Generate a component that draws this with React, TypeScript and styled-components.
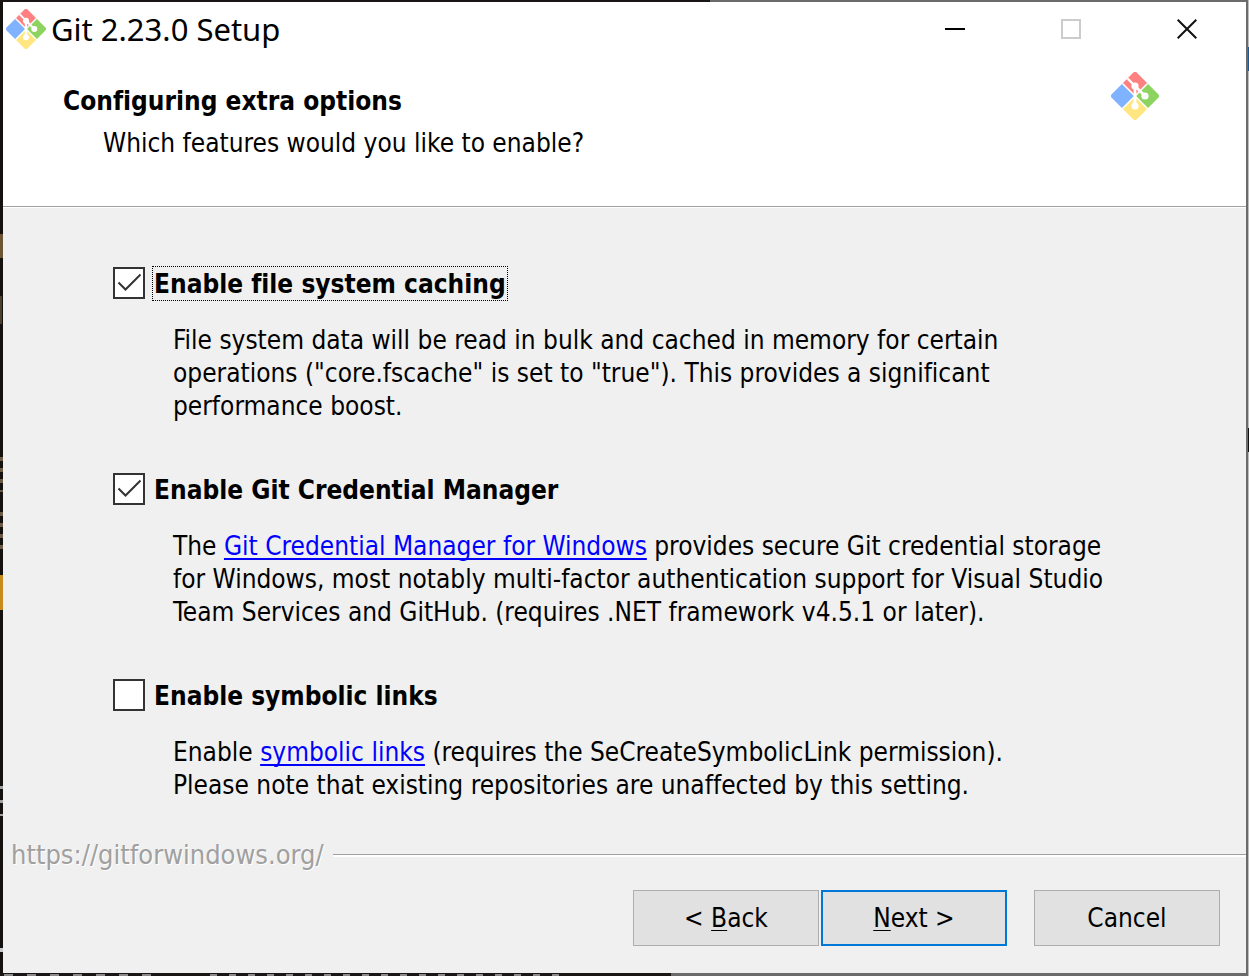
import React, { useId, useState } from 'react';
import styled, { createGlobalStyle, css } from 'styled-components';

const GlobalStyle = createGlobalStyle`
  * { box-sizing: border-box; }
  body {
    margin: 0;
    color: #000;
    font-family: "DejaVu Sans Condensed", "DejaVu Sans", Tahoma, sans-serif;
    font-size: 26px;
    font-variant-ligatures: none;
    line-height: 33px;
  }
  h1, h2, p { margin: 0; }
`;

const Desktop = styled.div`
  position: relative;
  display: flex;
  min-height: 100vh;
  padding: 2px 3px 3px;
  overflow: hidden;
  background:
    linear-gradient(#c98a1c, #c98a1c) 0 575px / 3px 35px no-repeat,
    linear-gradient(#6b5534, #6b5534) 0 234px / 3px 24px no-repeat,
    linear-gradient(#4d4030, #4d4030) 0 296px / 2px 28px no-repeat,
    repeating-linear-gradient(#6b5a45 0 4px, #14110f 4px 11px) 0 457px / 3px 35px no-repeat,
    repeating-linear-gradient(#6b5a45 0 4px, #14110f 4px 11px) 0 512px / 3px 37px no-repeat,
    repeating-linear-gradient(#a0a0a0 0 3px, #14110f 3px 14px) 0 786px / 3px 30px no-repeat,
    linear-gradient(#c8c8c8, #c8c8c8) 0 948px / 3px 4px no-repeat,
    linear-gradient(#6b6b6b, #6b6b6b) right 1px top 0 / 2px 100% no-repeat,
    linear-gradient(#1c5a94, #1c5a94) right 0 top 47px / 1px 24px no-repeat,
    linear-gradient(#111, #111) right 0 top 428px / 1px 24px no-repeat,
    linear-gradient(#bdbdbd, #bdbdbd) right 0 top 0 / 1px 100% no-repeat,
    linear-gradient(90deg, #1a1616 710px, #6b6b6b 710px) 0 0 / 100% 2px no-repeat,
    repeating-linear-gradient(90deg, #8a8a8a 0 9px, #1a1616 9px 23px) 4px 100% / 160px 2px no-repeat,
    repeating-linear-gradient(90deg, #8a8a8a 0 7px, #1a1616 7px 19px) 210px 100% / 350px 2px no-repeat,
    linear-gradient(90deg, #1a1616 671px, #6b6b6b 671px) 0 100% / 100% 3px no-repeat,
    #14110f;
`;

const Window = styled.main`
  flex: 1;
  display: flex;
  flex-direction: column;
  background: #f0f0f0;
`;

const TitleBar = styled.header`
  display: flex;
  align-items: center;
  height: 54px;
  padding: 0 1px 0 3px;
  background: #fff;
`;

const Title = styled.h1`
  flex: 1;
  margin-left: 5px;
  font: 400 31px/40px "Noto Sans", "Segoe UI", sans-serif;
`;

const CaptionButton = styled.button`
  display: grid;
  place-items: center;
  width: 116px;
  height: 54px;
  padding: 0;
  border: 0;
  background: none;
`;

const Heading = styled.section`
  display: flex;
  justify-content: space-between;
  align-items: flex-start;
  height: 151px;
  padding: 16px 87px 0 60px;
  border-bottom: 1px solid #a0a0a0;
  box-shadow: 0 1px #fff;
  background: #fff;
`;

const HeadingText = styled.div`
  padding-top: 13px;
`;

const PageTitle = styled.h2`
  font-size: 26px;
  font-weight: 700;
`;

const PageSubtitle = styled.p`
  margin: 9px 0 0 40px;
`;

const Options = styled.form`
  flex: 1;
  display: flex;
  flex-direction: column;
  gap: 49px;
  padding: 59px 110px 35px;
`;

const OptionLabel = styled.label`
  display: flex;
  align-items: flex-start;
  gap: 7px;
  font-weight: 700;
`;

const LabelText = styled.span<{ $focused?: boolean }>`
  padding: 2px 1px 0;
  border: 1px solid transparent;
  line-height: 31px;
  white-space: nowrap;
  ${({ $focused }) => $focused && css`border: 1px dotted #000;`}
`;

const CheckFrame = styled.span`
  display: grid;
  flex: none;
  width: 32px;
  height: 32px;
  margin-top: 1px;

  & > * { grid-area: 1 / 1; }
`;

const CheckInput = styled.input`
  appearance: none;
  width: 32px;
  height: 32px;
  margin: 0;
  border: 2px solid #333;
  background: #fff;
  outline: none;
`;

const Tick = styled.svg`
  width: 32px;
  height: 32px;
  pointer-events: none;
`;

const Description = styled.p`
  max-width: 960px;
  margin: 23px 0 0 60px;
`;

const Link = styled.a`
  color: #00f;
  text-decoration-thickness: 2px;
  text-underline-offset: 3px;
  text-decoration-skip-ink: none;
`;

const SiteRule = styled.div`
  display: flex;
  align-items: center;
  gap: 9px;
  padding-left: 8px;
  color: #a0a0a0;
  font-size: 27px;
  text-shadow: 1px 1px #fff;

  &::after {
    content: "";
    flex: 1;
    height: 2px;
    margin-top: 2px;
    border-top: 1px solid #a0a0a0;
    background: #fff;
  }
`;

const Footer = styled.footer`
  display: flex;
  justify-content: flex-end;
  gap: 2px;
  padding: 19px 26px 27px;
`;

const PushButton = styled.button<{ $primary?: boolean; $apart?: boolean }>`
  width: 186px;
  height: 56px;
  margin-left: ${({ $apart }) => ($apart ? '25px' : '0')};
  padding: 1px 0 0;
  border: ${({ $primary }) => ($primary ? '2px solid #0078d7' : '1px solid #adadad')};
  background: #e1e1e1;
  color: #000;
  font: inherit;
`;

const AccessKey = styled.span`
  text-decoration: underline;
  text-decoration-thickness: 1px;
  text-underline-offset: 3px;
  text-decoration-skip-ink: none;
`;

function GitLogo({ size }: { size: number }) {
  const clip = useId();
  return (
    <svg width={size} height={size} viewBox="0 0 48 48" aria-hidden="true">
      <clipPath id={clip}>
        <rect x="6.2" y="6.2" width="35.6" height="35.6" rx="3" transform="rotate(45 24 24)" />
      </clipPath>
      <g clipPath={`url(#${clip})`}>
        <path d="M24 24 0 0H48Z" fill="#ff8080" />
        <path d="M24 24 0 0V48Z" fill="#80b3ff" />
        <path d="M24 24 48 0V48Z" fill="#8dd35f" />
        <path d="M24 24 0 48H48Z" fill="#ffe680" />
        <path d="M10 10 38 38M38 10 10 38" stroke="#fff" strokeWidth="1.6" />
        <path d="M15 5 24 14" stroke="#fff" strokeWidth="2.4" />
        <path d="M24 14 34 24M24 14V34" stroke="#fff" strokeWidth="2.8" />
        <circle cx="24" cy="14" r="3.6" fill="#fff" />
        <circle cx="34" cy="24" r="3.6" fill="#fff" />
        <circle cx="24" cy="34" r="3.6" fill="#fff" />
      </g>
    </svg>
  );
}

interface OptionProps {
  label: string;
  initial?: boolean;
  focused?: boolean;
  children: React.ReactNode;
}

function Option({ label, initial = false, focused, children }: OptionProps) {
  const id = useId();
  const [checked, setChecked] = useState(initial);
  return (
    <div>
      <OptionLabel htmlFor={id}>
        <CheckFrame>
          <CheckInput
            id={id}
            type="checkbox"
            checked={checked}
            onChange={(event) => setChecked(event.target.checked)}
          />
          {checked && (
            <Tick viewBox="0 0 32 32" aria-hidden="true">
              <path d="M5.5 15.5 12.5 22.5 27.5 7.5" fill="none" stroke="#333" strokeWidth="2" />
            </Tick>
          )}
        </CheckFrame>
        <LabelText $focused={focused}>{label}</LabelText>
      </OptionLabel>
      <Description>{children}</Description>
    </div>
  );
}

export default function App() {
  return (
    <Desktop>
      <GlobalStyle />
      <Window>
        <TitleBar>
          <GitLogo size={40} />
          <Title>Git 2.23.0 Setup</Title>
          <CaptionButton aria-label="Minimize">
            <svg width="20" height="20"><path d="M0 10H20" stroke="#000" strokeWidth="2" /></svg>
          </CaptionButton>
          <CaptionButton aria-label="Maximize" disabled>
            <svg width="20" height="20"><path d="M1 1H19V19H1Z" fill="none" stroke="#ccc" strokeWidth="2" /></svg>
          </CaptionButton>
          <CaptionButton aria-label="Close">
            <svg width="20" height="20"><path d="M.7.7 19.3 19.3M19.3.7.7 19.3" stroke="#111" strokeWidth="2" /></svg>
          </CaptionButton>
        </TitleBar>
        <Heading>
          <HeadingText>
            <PageTitle>Configuring extra options</PageTitle>
            <PageSubtitle>Which features would you like to enable?</PageSubtitle>
          </HeadingText>
          <GitLogo size={48} />
        </Heading>
        <Options>
          <Option label="Enable file system caching" initial focused>
            File system data will be read in bulk and cached in memory for certain
            <br />
            operations ("core.fscache" is set to "true"). This provides a significant
            <br />
            performance boost.
          </Option>
          <Option label="Enable Git Credential Manager" initial>
            The <Link href="#credential-manager">Git Credential Manager for Windows</Link> provides
            secure Git credential storage
            <br />
            for Windows, most notably multi-factor authentication support for Visual Studio
            <br />
            Team Services and GitHub. (requires .NET framework v4.5.1 or later).
          </Option>
          <Option label="Enable symbolic links">
            Enable <Link href="#symbolic-links">symbolic links</Link> (requires the
            SeCreateSymbolicLink permission).
            <br />
            Please note that existing repositories are unaffected by this setting.
          </Option>
        </Options>
        <SiteRule>https://gitforwindows.org/</SiteRule>
        <Footer>
          <PushButton type="button">&lt; <AccessKey>B</AccessKey>ack</PushButton>
          <PushButton type="button" $primary><AccessKey>N</AccessKey>ext &gt;</PushButton>
          <PushButton type="button" $apart>Cancel</PushButton>
        </Footer>
      </Window>
    </Desktop>
  );
}
